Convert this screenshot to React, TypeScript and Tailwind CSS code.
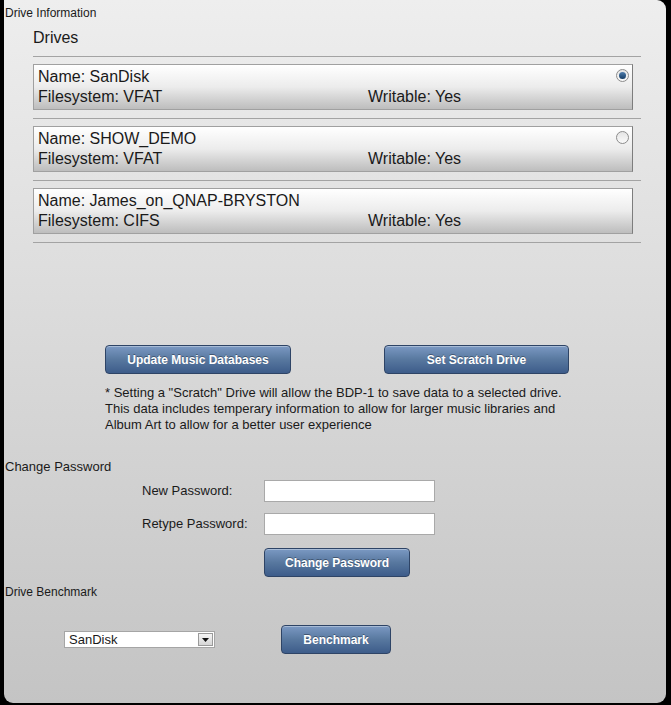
import React from 'react';

const drives = [
  { name: 'SanDisk', fs: 'VFAT', writable: 'Yes', radio: 'on' },
  { name: 'SHOW_DEMO', fs: 'VFAT', writable: 'Yes', radio: 'off' },
  { name: 'James_on_QNAP-BRYSTON', fs: 'CIFS', writable: 'Yes', radio: 'none' },
];

function BlueButton({ label, className }: { label: string; className: string }) {
  return (
    <button
      className={`h-[29px] rounded-[4px] border border-[#2e4466] bg-gradient-to-b from-[#7b99c3] via-[#58789f] to-[#3d5c8a] text-[12px] font-bold text-white shadow-[inset_0_1px_0_rgba(255,255,255,0.35)] [text-shadow:0_-1px_0_rgba(0,0,0,0.35)] ${className}`}
    >
      {label}
    </button>
  );
}

function Radio({ checked }: { checked: boolean }) {
  return (
    <div className="absolute right-[3px] top-[4px] flex h-[13px] w-[13px] items-center justify-center rounded-full border border-[#8c8c8c] bg-gradient-to-b from-[#e4e4e4] to-[#fafafa]">
      {checked && <div className="h-[7px] w-[7px] rounded-full bg-gradient-to-b from-[#4f7eae] to-[#153d66]" />}
    </div>
  );
}

export default function App() {
  return (
    <div className="h-[705px] w-full bg-black pl-[4px] pr-[5px] font-['Liberation_Sans',Arial,sans-serif] text-[#1a1a1a]">
      <div className="h-[703px] rounded-b-[9px] rounded-tr-[9px] bg-gradient-to-b from-[#eeeeee] to-[#c4c4c4]">
        {/* Drive Information */}
        <div className="pl-[1px] pt-[5px] text-[12px] leading-[16px]">Drive Information</div>
        <div className="ml-[29px] w-[608px]">
          <div className="mt-[7px] text-[16px] leading-[20px]">Drives</div>
          <div className="mt-[8px] border-t border-[#a3a3a3]" />
          {drives.map((d) => (
            <div key={d.name}>
              <div className="relative mr-[8px] mt-[7px] border border-[#a0a0a0] border-r-[#7d7d7d] bg-gradient-to-b from-[#ffffff] via-[#ececec] to-[#bdbdbd] px-[4px] pb-[2px] pt-[2px] text-[16px] leading-[20px]">
                <div>Name: {d.name}</div>
                <div className="flex">
                  <span className="w-[330px]">Filesystem: {d.fs}</span>
                  <span>Writable: {d.writable}</span>
                </div>
                {d.radio !== 'none' && <Radio checked={d.radio === 'on'} />}
              </div>
              <div className="mt-[8px] border-t border-[#a3a3a3]" />
            </div>
          ))}
        </div>

        {/* Actions */}
        <div className="ml-[101px] mt-[102px] flex gap-[93px]">
          <BlueButton label="Update Music Databases" className="w-[186px]" />
          <BlueButton label="Set Scratch Drive" className="w-[185px]" />
        </div>
        <p className="ml-[101px] mt-[11px] w-[480px] text-[13px] leading-[16px]">
          * Setting a "Scratch" Drive will allow the BDP-1 to save data to a selected drive. This data includes temperary
          information to allow for larger music libraries and Album Art to allow for a better user experience
        </p>

        {/* Change Password */}
        <div className="mt-[26px] pl-[1px] text-[13px] leading-[16px]">Change Password</div>
        <div className="ml-[138px] mt-[5px] flex flex-col gap-[11px] text-[13px]">
          <div className="flex items-center">
            <span className="w-[122px]">New Password:</span>
            <input type="password" className="h-[22px] w-[171px] border border-[#a9a9a9] bg-white" />
          </div>
          <div className="flex items-center">
            <span className="w-[122px]">Retype Password:</span>
            <input type="password" className="h-[22px] w-[171px] border border-[#a9a9a9] bg-white" />
          </div>
        </div>
        <BlueButton label="Change Password" className="ml-[260px] mt-[13px] w-[146px]" />

        {/* Drive Benchmark */}
        <div className="mt-[7px] pl-[1px] text-[12px] leading-[16px]">Drive Benchmark</div>
        <div className="ml-[60px] mt-[25px] flex items-center">
          <div className="flex h-[17px] w-[151px] items-center border border-[#a5a5a5] bg-white">
            <span className="flex-1 pl-[4px] text-[13px] leading-[15px]">SanDisk</span>
            <div className="mr-[1px] flex h-[13px] w-[15px] items-center justify-center border border-[#9a9a9a] bg-gradient-to-b from-[#f4f4f4] to-[#d6d6d6]">
              <svg width="7" height="4" viewBox="0 0 7 4">
                <path d="M0 0h7L3.5 4z" fill="#111" />
              </svg>
            </div>
          </div>
          <BlueButton label="Benchmark" className="ml-[66px] w-[110px]" />
        </div>
      </div>
    </div>
  );
}
